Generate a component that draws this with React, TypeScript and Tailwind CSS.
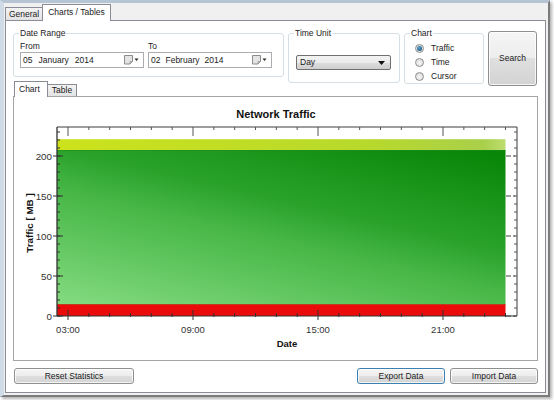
import React from 'react';

const ui = "font-['Liberation_Sans',Arial,sans-serif] text-[8.5px] leading-[11px] text-[#1b1b1b]";

const btn =
  'flex items-center justify-center rounded-[3px] border bg-[linear-gradient(to_bottom,#f5f5f5_0%,#ededed_50%,#dfdfdf_50%,#d3d3d3_100%)] shadow-[inset_0_0_0_1px_rgba(255,255,255,0.75)]';

function GroupBox({ title, className, children }: { title: string; className: string; children?: React.ReactNode }) {
  return (
    <fieldset className={`rounded-[3px] border border-[#d5dfe5] ${className}`}>
      <legend className="ml-[5px] px-[1px]">{title}</legend>
      {children}
    </fieldset>
  );
}

function CalendarIcon() {
  return (
    <svg width="15" height="10" viewBox="0 0 15 10">
      <path d="M0.5 0.5h8v6l-2.5 2.5h-5.5z" fill="#e4e4e4" stroke="#8c8c8c" />
      <path d="M8.5 6.5l-2.5 2.5v-2.5z" fill="#c4c4c4" stroke="#8c8c8c" strokeWidth="0.6" />
      <path d="M10.5 3.5h4l-2 2.5z" fill="#2b2b2b" />
    </svg>
  );
}

function DateInput({ parts, gap }: { parts: string[]; gap: string }) {
  return (
    <div className="flex h-[16px] w-[124px] items-center justify-between border border-[#abadb3] bg-white pl-[2px] pr-[4px]">
      <div className={`flex ${gap}`}>
        {parts.map((p) => (
          <span key={p}>{p}</span>
        ))}
      </div>
      <CalendarIcon />
    </div>
  );
}

function Radio({ label, checked }: { label: string; checked?: boolean }) {
  return (
    <div className="flex h-[14px] items-center">
      <span className="flex h-[9px] w-[9px] items-center justify-center rounded-full border border-[#8e8f8f] bg-[radial-gradient(circle_at_50%_60%,#f7f7f7,#d2d2d2)]">
        {checked && (
          <span className="h-[5px] w-[5px] rounded-full bg-[radial-gradient(circle_at_40%_35%,#5aa8d8,#143c5c)]" />
        )}
      </span>
      <span className="ml-[7px]">{label}</span>
    </div>
  );
}

function NetworkChart() {
  const left = 43;
  const right = 503;
  const top = 30;
  const bottom = 219;
  const hx = (h: number) => 54 + (h - 3) * (125 / 6);
  const vy = (v: number) => bottom - v * 0.8;
  const fillEnd = hx(24);
  const hours = Array.from({ length: 22 }, (_, i) => i + 3);
  const majorsX = [3, 9, 15, 21];
  const minorsY = Array.from({ length: 24 }, (_, i) => i * 10);
  const majorsY = [0, 50, 100, 150, 200];

  return (
    <svg width="523" height="263" viewBox="0 0 523 263" className="block font-['Liberation_Sans',Arial,sans-serif]">
      <defs>
        <linearGradient id="green" gradientUnits="userSpaceOnUse" x1={left} y1={207} x2={99} y2={-37}>
          <stop offset="0" stopColor="#84db80" />
          <stop offset="0.45" stopColor="#46b646" />
          <stop offset="0.6" stopColor="#2ba32b" />
          <stop offset="1" stopColor="#058405" />
        </linearGradient>
        <linearGradient id="yellow" gradientUnits="userSpaceOnUse" x1={left} y1="0" x2={fillEnd} y2="0">
          <stop offset="0" stopColor="#cce31c" />
          <stop offset="0.7" stopColor="#b7d92c" />
          <stop offset="0.95" stopColor="#a9d04a" />
          <stop offset="1" stopColor="#bcdd70" />
        </linearGradient>
      </defs>

      <text x="262" y="21" textAnchor="middle" fontSize="11" fontWeight="bold" fill="#111">
        Network Traffic
      </text>

      {/* areas */}
      <rect x={left} y={vy(221)} width={fillEnd - left} height={vy(207.5) - vy(221)} fill="url(#yellow)" />
      <rect x={left} y={vy(207.5)} width={fillEnd - left} height={vy(15) - vy(207.5)} fill="url(#green)" />
      <line x1={left} y1={vy(207.5) + 0.5} x2={fillEnd} y2={vy(207.5) + 0.5} stroke="#1f8c1f" strokeOpacity="0.6" />
      <rect x={left} y={vy(15)} width={fillEnd - left} height={vy(0) - vy(15)} fill="#ec0b0b" />
      <line x1={left} y1={vy(15) + 0.5} x2={fillEnd} y2={vy(15) + 0.5} stroke="#b24a24" strokeOpacity="0.8" />

      {/* frame */}
      <line x1={left} y1={top} x2={right} y2={top} stroke="#7c7c7c" strokeWidth="1.6" />
      <line x1={right} y1={top} x2={right} y2={bottom} stroke="#5a5a5a" strokeWidth="1.2" />
      <line x1={left} y1={bottom} x2={right} y2={bottom} stroke="#333" strokeWidth="1.2" />
      <line x1={left} y1={top} x2={left} y2={bottom} stroke="#333" strokeWidth="1.3" />

      {/* x ticks */}
      {hours.map((h) => {
        const major = majorsX.includes(h);
        const x = hx(h);
        return (
          <g key={h} stroke="#333" strokeWidth="1">
            <line x1={x} y1={top} x2={x} y2={top + (major ? 9 : 3)} stroke="#555" />
            <line x1={x} y1={major ? bottom - 6 : bottom - 3} x2={x} y2={bottom + (major ? 4 : 1)} />
          </g>
        );
      })}

      {/* y ticks */}
      {minorsY.map((v) => (
        <g key={v} stroke="#333" strokeWidth="1">
          <line x1={left} y1={vy(v)} x2={left + 3} y2={vy(v)} />
          <line x1={right - 3} y1={vy(v)} x2={right} y2={vy(v)} stroke="#555" />
        </g>
      ))}
      {majorsY.map((v) => (
        <g key={v}>
          <line x1={left - 4} y1={vy(v)} x2={left + 6} y2={vy(v)} stroke="#333" />
          <line x1={right - 11} y1={vy(v)} x2={right} y2={vy(v)} stroke="#444" strokeDasharray="5 2 2 2" />
          <text x={left - 5} y={vy(v) + 3.5} textAnchor="end" fontSize="9.8" fill="#333">
            {v}
          </text>
        </g>
      ))}

      {majorsX.map((h) => (
        <text key={h} x={hx(h)} y="236" textAnchor="middle" fontSize="9.5" fill="#333">
          {String(h).padStart(2, '0')}:00
        </text>
      ))}

      <text x="273" y="250" textAnchor="middle" fontSize="9.5" fontWeight="bold" fill="#111">
        Date
      </text>
      <text transform="translate(18.5,126) rotate(-90)" textAnchor="middle" fontSize="9.8" fontWeight="bold" fill="#111">
        Traffic [ MB ]
      </text>
    </svg>
  );
}

export default function App() {
  return (
    <div className={`h-[400px] w-[554px] overflow-hidden bg-white ${ui}`}>
      <div className="h-[397px] w-[550px] border-t-[3px] border-r-[2px] border-b-[2px] border-l-[4px] border-t-[#b6c5d4] border-r-[#7b7b7b] border-b-[#7b7b7b] border-l-[#cfdbe7] bg-[#f0f0f0] shadow-[2px_2px_3px_rgba(0,0,0,0.3)]">
        {/* Outer tabs */}
        <div className="flex h-[17px] items-end pl-[1px]">
          <div className="flex h-[13px] w-[38px] items-center justify-center border border-b-0 border-[#898c95] bg-[linear-gradient(to_bottom,#f3f3f3,#e3e3e3)]">
            General
          </div>
          <div className="relative z-10 -mb-px -ml-px flex h-[17px] w-[69px] items-center justify-center border border-b-0 border-[#898c95] bg-white pb-[1px]">
            Charts / Tables
          </div>
        </div>

        {/* Tab page */}
        <div className="ml-[1px] flex h-[373px] w-[541px] flex-col border border-[#898c95] bg-white">
          {/* Filters row */}
          <div className="mt-[7px] ml-[7px] flex h-[53px] items-start gap-[4px]">
            <GroupBox title="Date Range" className="h-[49px] w-[271px]">
              <div className="flex gap-[4px] pt-[2px] pl-[6px]">
                <div className="flex flex-col">
                  <span>From</span>
                  <DateInput parts={['05', 'January', '2014']} gap="gap-[6px]" />
                </div>
                <div className="flex flex-col">
                  <span>To</span>
                  <DateInput parts={['02', 'February', '2014']} gap="gap-[5px]" />
                </div>
              </div>
            </GroupBox>

            <GroupBox title="Time Unit" className="h-[55px] w-[112px]">
              <div className="mt-[16px] ml-[7px] flex h-[15px] w-[95px] items-center justify-between rounded-[2px] border border-[#707070] bg-[linear-gradient(to_bottom,#f2f2f2_0%,#ebebeb_50%,#dddddd_50%,#cfcfcf_100%)] pr-[5px] pl-[3px]">
                <span>Day</span>
                <svg width="7" height="4" viewBox="0 0 7 4">
                  <path d="M0 0h7l-3.5 4z" fill="#111" />
                </svg>
              </div>
            </GroupBox>

            <GroupBox title="Chart" className="h-[56px] w-[80px]">
              <div className="flex flex-col pt-[2px] pl-[10px]">
                <Radio label="Traffic" checked />
                <Radio label="Time" />
                <Radio label="Cursor" />
              </div>
            </GroupBox>

            <button className={`mt-[3px] h-[55px] w-[49px] border-[#8e8f8f] ${btn}`}>Search</button>
          </div>

          {/* Inner tab control */}
          <div className="ml-[7px] w-[525px]">
            <div className="flex h-[15px] items-end pl-[1px]">
              <div className="relative z-10 -mb-px flex h-[16px] w-[34px] items-center border border-b-0 border-[#898c95] bg-white pl-[4px]">
                Chart
              </div>
              <div className="flex h-[12px] w-[29px] items-center justify-center border border-b-0 border-l-0 border-[#898c95] bg-[linear-gradient(to_bottom,#f3f3f3,#e3e3e3)]">
                Table
              </div>
            </div>
            <div className="h-[265px] border border-[#a5a5a5] bg-white">
              <NetworkChart />
            </div>
          </div>

          {/* Buttons */}
          <div className="mt-[7px] flex items-center justify-between pr-[7px] pl-[8px]">
            <button className={`h-[16px] w-[120px] border-[#8e8f8f] ${btn}`}>Reset Statistics</button>
            <div className="flex gap-[5px]">
              <button className={`h-[16px] w-[88px] border-[#3c7fb1] ${btn}`}>Export Data</button>
              <button className={`h-[16px] w-[88px] border-[#8e8f8f] ${btn}`}>Import Data</button>
            </div>
          </div>
        </div>
      </div>
    </div>
  );
}
